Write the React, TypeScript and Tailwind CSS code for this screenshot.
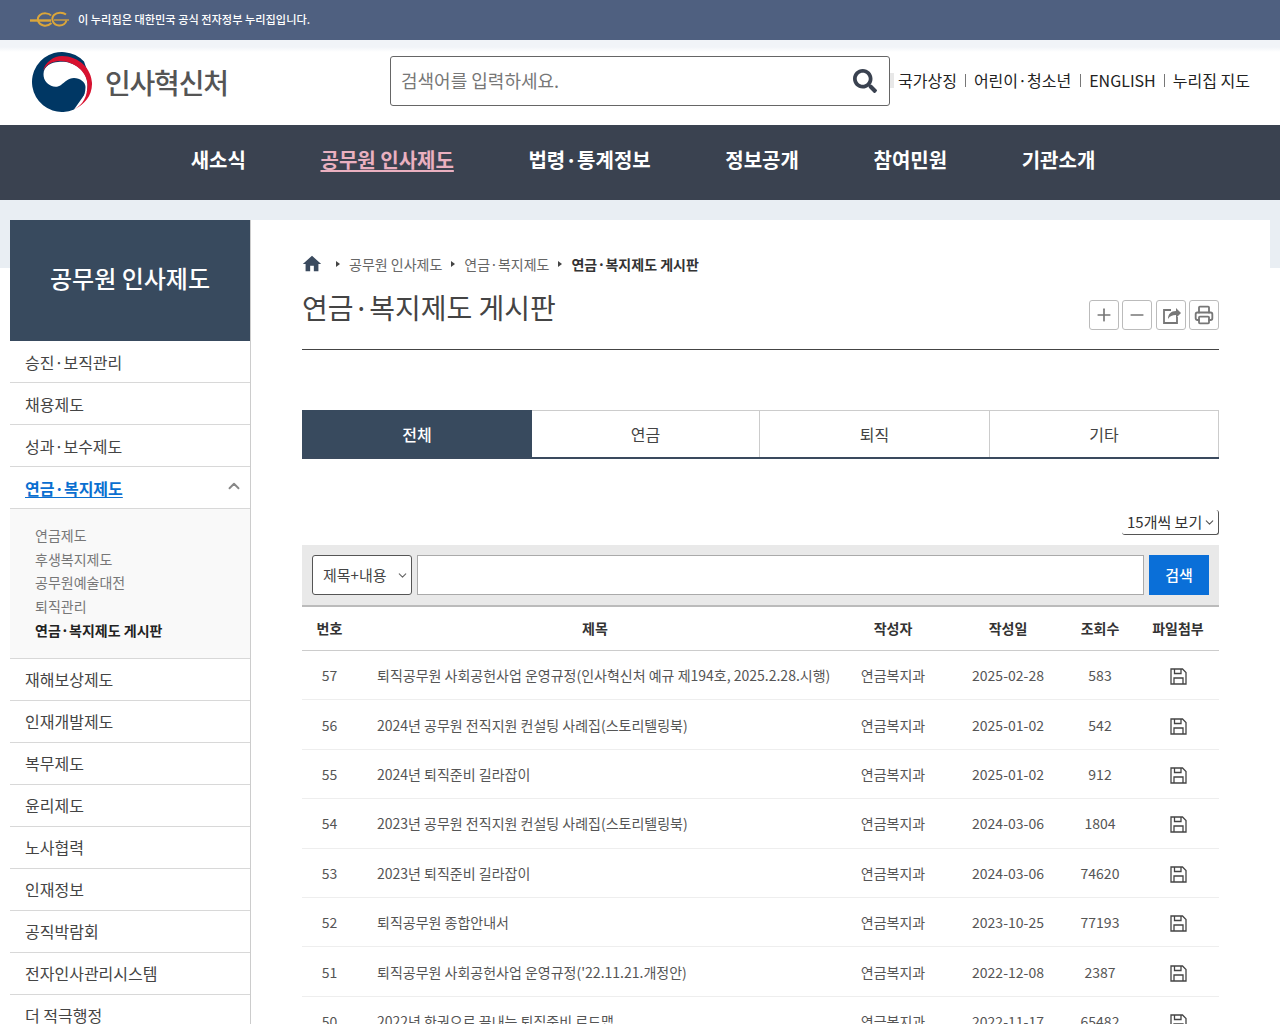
import { FaSearch } from "react-icons/fa";
import { FiChevronDown, FiChevronUp, FiMinus, FiPlus } from "react-icons/fi";
import { LuPrinter } from "react-icons/lu";
import { MdHome } from "react-icons/md";

const navItems = ["새소식", "공무원 인사제도", "법령·통계정보", "정보공개", "참여민원", "기관소개"];
const sideTop = ["승진·보직관리", "채용제도", "성과·보수제도"];
const sideSub = ["연금제도", "후생복지제도", "공무원예술대전", "퇴직관리"];
const sideBottom = ["재해보상제도", "인재개발제도", "복무제도", "윤리제도", "노사협력", "인재정보", "공직박람회", "전자인사관리시스템", "더 적극행정"];
const tabs = ["전체", "연금", "퇴직", "기타"];
const columns = ["번호", "제목", "작성자", "작성일", "조회수", "파일첨부"];

const rows = [
  [57, "퇴직공무원 사회공헌사업 운영규정(인사혁신처 예규 제194호, 2025.2.28.시행)", "2025-02-28", 583],
  [56, "2024년 공무원 전직지원 컨설팅 사례집(스토리텔링북)", "2025-01-02", 542],
  [55, "2024년 퇴직준비 길라잡이", "2025-01-02", 912],
  [54, "2023년 공무원 전직지원 컨설팅 사례집(스토리텔링북)", "2024-03-06", 1804],
  [53, "2023년 퇴직준비 길라잡이", "2024-03-06", 74620],
  [52, "퇴직공무원 종합안내서", "2023-10-25", 77193],
  [51, "퇴직공무원 사회공헌사업 운영규정('22.11.21.개정안)", "2022-12-08", 2387],
  [50, "2022년 한권으로 끝내는 퇴직준비 로드맵", "2022-11-17", 65482],
];

const Arrow = () => (
  <svg width="4" height="6" viewBox="0 0 4 6" className="fill-[#444]">
    <path d="M0 0l4 3-4 3z" />
  </svg>
);

const EgLogo = () => (
  <svg width="40" height="18" viewBox="0 0 40 18" fill="none" stroke="#dba63a" strokeWidth="2" className="ml-[-2px]">
    <path d="M0 9.500h21" strokeWidth="2.400" />
    <path d="M24 9h15" strokeWidth="1.300" />
    <path d="M21 4.500c-2-2.500-8-3-11-.5-4 3.500-2 9.500 3.500 10.500 3 .5 6-.5 8-2.500" />
    <path d="M36 3.500c-3-2.500-9-2.500-12 .5-3.500 4 -1 10 5 10.500 4 .2 6.500-2 7.500-5" />
  </svg>
);

const Taegeuk = () => (
  <svg width="60" height="60" viewBox="32 52 60 60">
    <path d="M74 109.500A30 30 0 1 1 84 61.600L92 84Z" fill="#003764" />
    <path
      d="M43.500 74C43.500 66 52 62 58 62C70 60 87 68 87.500 84C88 96 82 105 74 109.500C81 104 85.500 96 85.500 87C85.500 82 80 78 74 78C68 78 65 82 61 85C57 88 51 87 47 83C44 80 43.500 77 43.500 74Z"
      fill="#fff"
    />
    <path
      d="M43 71C45 62 54 56 62 56C78 56 92 68 92 84C92 96 84 105 74 109.500C83 105 87.500 96 87.500 85C87.500 72 74 61 60 61C52 61 46 65 43 71Z"
      fill="#d8112f"
    />
  </svg>
);

const ShareIcon = () => (
  <svg width="20" height="20" viewBox="0 0 20 20" fill="none">
    <path d="M10 5H3v13h13v-6" stroke="currentColor" strokeWidth="1.800" />
    <path d="M7 14c0-5 3-8 8-8V3l5 5-5 5v-3c-4 0-6 1-8 4z" fill="currentColor" />
  </svg>
);

const SaveIcon = () => (
  <svg width="17" height="17" viewBox="0 0 17 17" fill="none" stroke="#444" strokeWidth="1.300" className="mt-[2px]">
    <path d="M1 1h11.500L16 4.500V16H1z" />
    <path d="M4.500 1v4.500h6.500V1" />
    <path d="M4 16v-6h9v6" />
  </svg>
);

const ToolButton = ({ children }: { children: React.ReactNode }) => (
  <button className="flex h-[30px] w-[30px] items-center justify-center rounded-[3px] border border-[#bbb] bg-white text-[#777]">
    {children}
  </button>
);

const SideLink = ({ label }: { label: string }) => (
  <li className="flex h-[42px] items-center border-b border-[#d8d8d8] pl-[15px] text-[16px] text-[#444]">
    {label}
  </li>
);

export default function App() {
  return (
    <div className="h-[1024px] overflow-hidden bg-white font-['Noto_Sans_CJK_KR','Noto_Sans',sans-serif]">
      {/* TOP NOTICE */}
      <div className="flex h-10 items-center bg-[#4f6080] pl-[32px] text-[11.200px] font-medium text-white">
        <EgLogo />
        <span className="mb-[2px] ml-[8px]">이 누리집은 대한민국 공식 전자정부 누리집입니다.</span>
      </div>

      {/* HEADER */}
      <header className="flex h-[85px] items-center bg-[linear-gradient(#f1f4f8_7px,#fff_12px)] pb-[4px] pl-[32px]">
        <div className="mt-[2px] flex w-[358px] items-center">
          <Taegeuk />
          <span className="ml-[13px] text-[28px] font-medium tracking-[-1.200px] text-[#555]">인사혁신처</span>
        </div>
        <div className="flex h-[50px] w-[500px] items-center justify-between rounded-[3px] border border-[#666] bg-white pl-[10px] pr-[12px]">
          <span className="text-[18px] text-[#777]">검색어를 입력하세요.</span>
          <FaSearch size={24} className="text-[#3a4250]" />
        </div>
        <span className="h-[15px] w-[4px] bg-[#e8e8e8]" />
        <nav className="mb-[2px] ml-[4px] flex items-center text-[16px] text-[#222]">
          <span>국가상징</span>
          <span className="mx-[8px] mt-[2px] h-[13px] w-px bg-[#777]" />
          <span>어린이·청소년</span>
          <span className="mx-[8.500px] mt-[2px] h-[13px] w-px bg-[#777]" />
          <span>ENGLISH</span>
          <span className="mx-[8px] mt-[2px] h-[13px] w-px bg-[#777]" />
          <span>누리집 지도</span>
        </nav>
      </header>

      {/* MAIN NAV */}
      <nav className="flex h-[75px] items-center justify-center gap-[74.600px] bg-[#3a4250] pb-[5px] pl-[6px] text-[20px] font-bold text-white">
        {navItems.map((item) => (
          <span key={item} className={item === "공무원 인사제도" ? "text-[#eab0c0] underline underline-offset-2" : ""}>
            {item}
          </span>
        ))}
      </nav>

      {/* BODY */}
      <div className="flex bg-[linear-gradient(#e9eef3_68px,#fff_68px)] px-[10px] pt-[20px]">
        {/* SIDEBAR */}
        <aside className="w-[241px] shrink-0 border-r border-[#ccc] bg-white">
          <h2 className="flex h-[121px] items-center justify-center bg-[#384a5e] pb-[5px] text-[24px] font-medium text-white">
            공무원 인사제도
          </h2>
          <ul>
            {sideTop.map((label) => (
              <SideLink key={label} label={label} />
            ))}
            <li className="flex h-[42px] items-center justify-between border-b border-[#d8d8d8] pl-[15px] pr-[7px] text-[16px] font-bold text-[#0a6fd0]">
              <span className="underline underline-offset-2">연금·복지제도</span>
              <FiChevronUp size={18} strokeWidth={2.500} className="mb-[3px] text-[#888]" />
            </li>
            <li className="border-b border-[#d8d8d8] bg-[#f9f9f9] pb-[15px] pl-[25px] pt-[15px] text-[14px] leading-[23.700px] text-[#777]">
              {sideSub.map((label) => (
                <div key={label}>{label}</div>
              ))}
              <div className="font-bold text-[#222]">연금·복지제도 게시판</div>
            </li>
            {sideBottom.map((label) => (
              <SideLink key={label} label={label} />
            ))}
          </ul>
        </aside>

        {/* CONTENT */}
        <main className="min-w-0 flex-1 bg-white px-[51px] pt-[34px]">
          <div className="flex h-[20px] items-center text-[14px] text-[#666]">
            <MdHome size={22} className="ml-[-1px] mb-[1px] text-[#3a4a5e]" />
            <span className="ml-[13px] mr-[9px]"><Arrow /></span>
            <span>공무원 인사제도</span>
            <span className="mx-[9px]"><Arrow /></span>
            <span>연금·복지제도</span>
            <span className="mx-[9px]"><Arrow /></span>
            <span className="font-bold text-[#333]">연금·복지제도 게시판</span>
          </div>

          <div className="mt-[13px] flex h-[63px] items-start justify-between border-b border-[#444]">
            <h1 className="text-[28px] leading-[40px] text-[#444]">연금·복지제도 게시판</h1>
            <div className="mt-[13px] flex gap-[3.500px]">
              <ToolButton><FiPlus size={20} /></ToolButton>
              <ToolButton><FiMinus size={20} /></ToolButton>
              <ToolButton><ShareIcon /></ToolButton>
              <ToolButton><LuPrinter size={20} strokeWidth={2.200} /></ToolButton>
            </div>
          </div>

          {/* TABS */}
          <div className="mt-[60px] grid h-[49px] grid-cols-[230px_228px_230px_1fr] border-b-2 border-[#3a4a5e]">
            {tabs.map((tab, i) => (
              <div
                key={tab}
                className={
                  i === 0
                    ? "flex items-center justify-center bg-[#384a5e] text-[16px] font-medium text-white"
                    : "flex items-center justify-center border-r border-t border-[#ccc] text-[16px] text-[#444]"
                }
              >
                {tab}
              </div>
            ))}
          </div>

          <div className="mt-[51px] flex justify-end">
            <div className="flex h-[25px] w-[97px] items-center justify-between whitespace-nowrap rounded-[3px] border-b border-r border-[#555] pl-[5px] pr-[2px] text-[15px] text-[#333]">
              15개씩 보기
              <FiChevronDown size={13} className="text-[#555]" />
            </div>
          </div>

          {/* SEARCH */}
          <div className="mt-[10px] flex h-[62px] items-center gap-[5px] border-b-2 border-[#bbb] bg-[#e9e9e9] px-[10px]">
            <div className="flex h-[40px] w-[100px] items-center justify-between rounded-[3px] border border-[#555] bg-white pl-[10px] pr-[2px] text-[15px] text-[#444]">
              제목+내용
              <FiChevronDown size={13} className="text-[#666]" />
            </div>
            <div className="h-[40px] flex-1 border border-[#aaa] bg-white" />
            <button className="h-[40px] w-[60px] bg-[#0a6fd8] text-[15px] font-medium text-white">검색</button>
          </div>

          {/* TABLE */}
          <div className="grid h-[44px] grid-cols-[55px_476px_120px_110px_74px_82px] items-center border-b border-[#ccc] text-center text-[14px] font-bold text-[#333]">
            {columns.map((col) => (
              <span key={col}>{col}</span>
            ))}
          </div>
          {rows.map(([no, title, date, views]) => (
            <div
              key={no}
              className="grid h-[49.400px] grid-cols-[55px_476px_120px_110px_74px_82px] items-center border-b border-[#eee] pt-[1px] text-center text-[14px] text-[#555]"
            >
              <span>{no}</span>
              <span className="whitespace-nowrap pl-[20px] text-left">{title}</span>
              <span>연금복지과</span>
              <span>{date}</span>
              <span>{views}</span>
              <span className="flex justify-center">
                <SaveIcon />
              </span>
            </div>
          ))}
        </main>
      </div>
    </div>
  );
}
